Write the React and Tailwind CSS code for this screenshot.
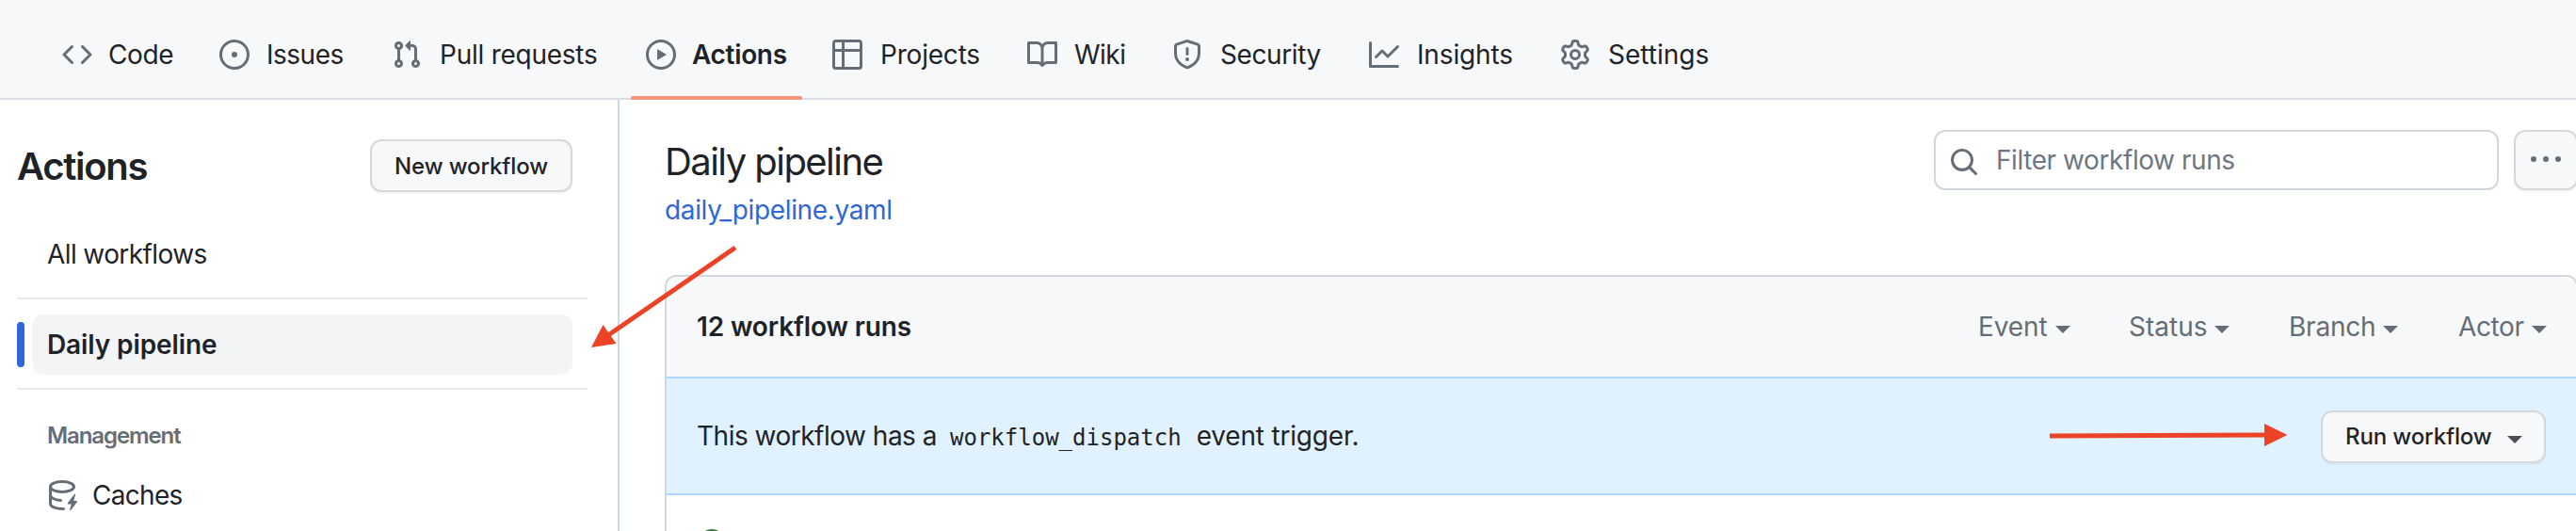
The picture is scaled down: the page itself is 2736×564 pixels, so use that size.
import React from "react";

const icons = {
  code: "m11.28 3.22 4.25 4.25a.75.75 0 0 1 0 1.06l-4.25 4.25a.749.749 0 0 1-1.275-.326.749.749 0 0 1 .215-.734L13.94 8l-3.72-3.72a.749.749 0 0 1 .326-1.275.749.749 0 0 1 .734.215Zm-6.56 0a.751.751 0 0 1 1.042.018.751.751 0 0 1 .018 1.042L2.06 8l3.72 3.72a.749.749 0 0 1-.326 1.275.749.749 0 0 1-.734-.215L.47 8.53a.75.75 0 0 1 0-1.06Z",
  issue: "M8 9.5a1.5 1.5 0 1 0 0-3 1.5 1.5 0 0 0 0 3ZM8 0a8 8 0 1 1 0 16A8 8 0 0 1 8 0ZM1.5 8a6.5 6.5 0 1 0 13 0 6.5 6.5 0 0 0-13 0Z",
  pull: "M1.5 3.25a2.25 2.25 0 1 1 3 2.122v5.256a2.251 2.251 0 1 1-1.5 0V5.372A2.25 2.25 0 0 1 1.5 3.25Zm5.677-.177L9.573.677A.25.25 0 0 1 10 .854V2.5h1A2.5 2.5 0 0 1 13.500 5v5.628a2.251 2.251 0 1 1-1.5 0V5a1 1 0 0 0-1-1h-1v1.646a.25.25 0 0 1-.427.177L7.177 3.427a.25.25 0 0 1 0-.354ZM3.75 2.5a.75.75 0 1 0 0 1.5.75.75 0 0 0 0-1.5Zm0 9.5a.75.75 0 1 0 0 1.5.75.75 0 0 0 0-1.5Zm8.25.75a.75.75 0 1 0 1.5 0 .75.75 0 0 0-1.5 0Z",
  play: "M8 0a8 8 0 1 1 0 16A8 8 0 0 1 8 0ZM1.5 8a6.5 6.5 0 1 0 13 0 6.5 6.5 0 0 0-13 0Zm4.879-2.773 4.264 2.559a.25.25 0 0 1 0 .428l-4.264 2.559A.25.25 0 0 1 6 10.559V5.442a.25.25 0 0 1 .379-.215Z",
  table: "M0 1.75C0 .784.784 0 1.75 0h12.5C15.216 0 16 .784 16 1.75v12.5A1.75 1.75 0 0 1 14.25 16H1.75A1.75 1.75 0 0 1 0 14.25ZM6.5 6.5v8h7.75a.25.25 0 0 0 .25-.25V6.5Zm8-1.5V1.75a.25.25 0 0 0-.25-.25H6.5V5Zm-13 1.5v7.75c0 .138.112.25.25.25H5v-8ZM5 5V1.5H1.75a.25.25 0 0 0-.25.25V5Z",
  book: "M0 1.75A.75.75 0 0 1 .75 1h4.253c1.227 0 2.317.59 3 1.501A3.743 3.743 0 0 1 11.006 1h4.245a.75.75 0 0 1 .75.75v10.5a.75.75 0 0 1-.75.75h-4.507a2.25 2.25 0 0 0-1.591.659l-.622.621a.75.75 0 0 1-1.06 0l-.622-.621A2.25 2.25 0 0 0 5.258 13H.75a.75.75 0 0 1-.75-.75Zm7.251 10.324.004-5.073-.002-2.253A2.25 2.25 0 0 0 5.003 2.5H1.5v9h3.757a3.75 3.75 0 0 1 1.994.574ZM8.755 4.75l-.004 7.322a3.752 3.752 0 0 1 1.992-.572H14.5v-9h-3.495a2.25 2.25 0 0 0-2.25 2.25Z",
  shield: "M7.467.133a1.748 1.748 0 0 1 1.066 0l5.25 1.68A1.75 1.75 0 0 1 15 3.48V7c0 1.566-.32 3.182-1.303 4.682-.983 1.498-2.585 2.813-5.032 3.855a1.697 1.697 0 0 1-1.33 0c-2.447-1.042-4.049-2.357-5.032-3.855C1.32 10.182 1 8.566 1 7V3.48a1.75 1.75 0 0 1 1.217-1.667Zm.61 1.429a.25.25 0 0 0-.153 0l-5.25 1.68a.25.25 0 0 0-.174.238V7c0 1.358.275 2.666 1.057 3.86.784 1.194 2.121 2.34 4.366 3.297a.196.196 0 0 0 .154 0c2.245-.956 3.582-2.104 4.366-3.298C13.225 9.666 13.5 8.36 13.5 7V3.48a.251.251 0 0 0-.174-.237l-5.25-1.68ZM8.75 4.75v3a.75.75 0 0 1-1.5 0v-3a.75.75 0 0 1 1.5 0ZM9 10.5a1 1 0 1 1-2 0 1 1 0 0 1 2 0Z",
  graph: "M1.5 1.75V13.5h13.75a.75.75 0 0 1 0 1.5H.75a.75.75 0 0 1-.75-.75V1.75a.75.75 0 0 1 1.5 0Zm14.28 2.53-5.25 5.25a.75.75 0 0 1-1.06 0L7 7.06 4.28 9.78a.751.751 0 0 1-1.042-.018.751.751 0 0 1-.018-1.042l3.25-3.25a.75.75 0 0 1 1.06 0L10 7.94l4.72-4.72a.751.751 0 0 1 1.042.018.751.751 0 0 1 .018 1.042Z",
  gear: "M8 0a8.2 8.2 0 0 1 .701.031C9.444.095 9.99.645 10.16 1.29l.288 1.107c.018.066.079.158.212.224.231.114.454.243.668.386.123.082.233.09.299.071l1.103-.303c.644-.176 1.392.021 1.82.63.27.385.506.792.704 1.218.315.675.111 1.422-.364 1.891l-.814.806c-.049.048-.098.147-.088.294.016.257.016.515 0 .772-.01.147.038.246.088.294l.814.806c.475.469.679 1.216.364 1.891a7.977 7.977 0 0 1-.704 1.217c-.428.61-1.176.807-1.82.63l-1.102-.302c-.067-.019-.177-.011-.3.071a5.909 5.909 0 0 1-.668.386c-.133.066-.194.158-.211.224l-.29 1.106c-.168.646-.715 1.196-1.458 1.26a8.006 8.006 0 0 1-1.402 0c-.743-.064-1.289-.614-1.458-1.26l-.289-1.106c-.018-.066-.079-.158-.212-.224a5.738 5.738 0 0 1-.668-.386c-.123-.082-.233-.09-.299-.071l-1.103.303c-.644.176-1.392-.021-1.82-.63a8.12 8.12 0 0 1-.704-1.218c-.315-.675-.111-1.422.363-1.891l.815-.806c.05-.048.098-.147.088-.294a6.214 6.214 0 0 1 0-.772c.01-.147-.038-.246-.088-.294l-.815-.806C.635 6.045.431 5.298.746 4.623a7.92 7.92 0 0 1 .704-1.217c.428-.61 1.176-.807 1.82-.63l1.102.302c.067.019.177.011.3-.071.214-.143.437-.272.668-.386.133-.066.194-.158.211-.224l.29-1.106C6.009.645 6.556.095 7.299.03 7.53.01 7.764 0 8 0Zm-.571 1.525c-.036.003-.108.036-.137.146l-.289 1.105c-.147.561-.549.967-.998 1.189-.173.086-.34.183-.5.29-.417.278-.97.423-1.529.27l-1.103-.303c-.109-.03-.175.016-.195.045-.22.312-.412.644-.573.99-.014.031-.021.11.059.19l.815.806c.411.406.562.957.53 1.456a4.709 4.709 0 0 0 0 .582c.032.499-.119 1.05-.53 1.456l-.815.806c-.081.08-.073.159-.059.19.162.346.353.677.573.989.02.03.085.076.195.046l1.102-.303c.56-.153 1.113-.008 1.53.27.161.107.328.204.501.29.447.222.85.629.997 1.189l.289 1.105c.029.109.101.143.137.146a6.6 6.6 0 0 0 1.142 0c.036-.003.108-.036.137-.146l.289-1.105c.147-.561.549-.967.998-1.189.173-.086.34-.183.5-.29.417-.278.97-.423 1.529-.27l1.103.303c.109.029.175-.016.195-.045.22-.313.411-.644.573-.99.014-.031.021-.11-.059-.19l-.815-.806c-.411-.406-.562-.957-.53-1.456a4.709 4.709 0 0 0 0-.582c-.032-.499.119-1.05.53-1.456l.815-.806c.081-.08.073-.159.059-.19a6.464 6.464 0 0 0-.573-.989c-.02-.03-.085-.076-.195-.046l-1.102.303c-.56.153-1.113.008-1.53-.27a4.44 4.44 0 0 0-.501-.29c-.447-.222-.85-.629-.997-1.189l-.289-1.105c-.029-.11-.101-.143-.137-.146a6.6 6.6 0 0 0-1.142 0ZM11 8a3 3 0 1 1-6 0 3 3 0 0 1 6 0ZM9.5 8a1.5 1.5 0 1 0-3.001.001A1.5 1.5 0 0 0 9.5 8Z",
  search: "M10.68 11.74a6 6 0 0 1-7.922-8.982 6 6 0 0 1 8.982 7.922l3.04 3.04a.749.749 0 0 1-.326 1.275.749.749 0 0 1-.734-.215ZM11.5 7a4.499 4.499 0 1 0-8.997 0A4.499 4.499 0 0 0 11.5 7Z",
  kebab: "M0 7.500a1.500 1.500 0 1 1 3 0 1.500 1.500 0 0 1-3 0Zm6.500 0a1.500 1.500 0 1 1 3 0 1.500 1.500 0 0 1-3 0Zm6.500 0a1.500 1.500 0 1 1 3 0 1.500 1.500 0 0 1-3 0Z",
};

const tabs = [
  { label: "Code", icon: "code", slot: "w-[71px] pl-px tracking-[-0.4px]" },
  { label: "Issues", icon: "issue", slot: "w-[87px] pl-0.5 tracking-[-0.5px]" },
  { label: "Pull requests", icon: "pull", slot: "w-[174px] pl-[3px] tracking-[-0.25px]" },
  { label: "Actions", icon: "play", slot: "w-[102px] pl-px font-semibold tracking-[-0.33px]", active: true },
  { label: "Projects", icon: "table", slot: "w-[111px] pl-[3px] tracking-[-0.2px]" },
  { label: "Wiki", icon: "book", slot: "w-[58px] pl-0.5 tracking-[-0.5px]" },
  { label: "Security", icon: "shield", slot: "w-[113px] pl-[3px] tracking-[-0.4px]" },
  { label: "Insights", icon: "graph", slot: "w-[107px] pl-[3px] tracking-[-0.15px]" },
  { label: "Settings", icon: "gear", slot: "w-[112px] pl-[3px]" },
];

const filters = [
  { label: "Event", slot: "w-[160px] tracking-[-0.1px]" },
  { label: "Status", slot: "w-[170px]" },
  { label: "Branch", slot: "w-[180px] tracking-[-0.2px]" },
  { label: "Actor", slot: "w-[93px] tracking-[-0.4px]" },
];

function Icon({ name, className }) {
  return (
    <svg viewBox="0 0 16 16" className={`size-8 shrink-0 text-[#656d76] ${className ?? ""}`} fill="currentColor">
      <path d={icons[name]} />
    </svg>
  );
}

function CacheIcon() {
  return (
    <svg viewBox="0 0 16 16" className="size-8 shrink-0 text-[#656d76]" fill="none" stroke="currentColor" strokeWidth="1.5" strokeLinecap="round">
      <ellipse cx="8" cy="3.5" rx="6.25" ry="2.75" />
      <path d="M1.750 3.500v9c0 1.500 2.700 2.700 7 2.750M1.750 8c0 1.200 2.200 2.500 5.500 2.730" />
      <path d="M14.600 7.400l-3.700 4.700c-.2.300 0 .6.300.6h1.700l-.8 2.900c-.1.400.3.600.6.300l3.200-4.300c.2-.3 0-.6-.3-.6h-1.400l.8-3.300c.1-.4-.2-.5-.4-.3z" fill="currentColor" stroke="none" />
    </svg>
  );
}

function Caret({ className }) {
  return (
    <svg viewBox="0 0 16 8" className={`mt-1.5 h-2 w-4 shrink-0 ${className ?? ""}`} fill="currentColor">
      <path d="M0 0h16L8 8z" />
    </svg>
  );
}

function Tab({ label, icon, slot, active }) {
  return (
    <div className="relative flex h-8 items-center gap-4 px-4">
      <Icon name={icon} />
      <span className={`leading-8 whitespace-nowrap ${slot}`}>{label}</span>
      {active && <span className="absolute inset-x-0 top-[60px] z-10 h-1 rounded-full bg-[#f4927b]" />}
    </div>
  );
}

export default function App() {
  return (
    <div className="relative flex h-[564px] w-[2736px] flex-col overflow-hidden bg-white font-['Inter',sans-serif] text-[28px] text-[#1f2328]">
      <nav className="flex h-[106px] shrink-0 gap-4 border-b-2 border-[#d9dde1] bg-[#f6f8fa] pt-[42px] pl-[50px]">
        {tabs.map((t) => <Tab key={t.label} {...t} />)}
      </nav>

      <div className="flex min-h-0 flex-1">
        <aside className="flex w-[658px] shrink-0 flex-col border-r-2 border-[#d0d7de] pl-[18px]">
          <div className="mt-[42px] flex h-14 items-center justify-between pr-12">
            <h1 className="pt-0.5 text-[40px] leading-[56px] font-semibold tracking-[-1.3px]">Actions</h1>
            <button className="h-14 w-[215px] rounded-xl border-2 border-[#d5d8da] bg-[#f6f8fa] pt-0.5 text-[24px] font-medium tracking-[-0.12px] shadow-[0_2px_0_rgba(31,35,40,0.04)]">New workflow</button>
          </div>
          <div className="mt-[34px] h-16 pl-8 leading-[64px] tracking-[-0.6px]">All workflows</div>
          <div className="mt-[14px] mr-8 h-0.5 bg-[#e8ebee]" />
          <div className="mt-4 flex h-16 items-center gap-2 pr-12">
            <span className="h-12 w-2 rounded-full bg-[#2f67d6]" />
            <span className="h-16 flex-1 rounded-xl bg-[#f3f4f6] pl-4 leading-[64px] font-semibold tracking-[-0.1px]">Daily pipeline</span>
          </div>
          <div className="mt-[14px] mr-8 h-0.5 bg-[#e8ebee]" />
          <div className="mt-[31px] pl-8 text-[24px] leading-[36px] font-semibold tracking-[-1.1px] text-[#656d76]">Management</div>
          <div className="mt-[13px] flex h-16 items-center gap-4 pl-8">
            <CacheIcon />
            <span className="tracking-[-0.7px]">Caches</span>
          </div>
        </aside>

        <main className="-mr-0.5 flex min-w-0 flex-1 flex-col pl-12">
          <div className="flex h-[186px] shrink-0 justify-between pt-8">
            <div className="pt-2">
              <h2 className="text-[40px] leading-[52px] tracking-[-1.55px]">Daily pipeline</h2>
              <a className="block leading-[50px] tracking-[-0.35px] text-[#2f67d6]">daily_pipeline.yaml</a>
            </div>
            <div className="flex gap-4">
              <div className="flex h-16 w-[600px] items-center gap-[18px] rounded-xl border-2 border-[#d0d7de] pl-3.5 text-[#6e7781]">
                <Icon name="search" className="mt-1" />
                <span className="tracking-[-0.43px]">Filter workflow runs</span>
              </div>
              <button className="flex h-16 w-[68px] items-center justify-center rounded-xl border-2 border-[#d5d8da] bg-[#f6f8fa] shadow-[0_2px_0_rgba(31,35,40,0.04)]">
                <Icon name="kebab" />
              </button>
            </div>
          </div>

          <section className="flex min-h-0 flex-1 flex-col rounded-t-xl border-2 border-b-0 border-[#d0d7de]">
            <div className="flex h-[106px] shrink-0 items-center justify-between rounded-t-[10px] bg-[#f6f8fa] pr-8 pl-8">
              <span className="font-semibold tracking-[-0.14px]">12 workflow runs</span>
              <div className="flex text-[#656d76]">
                {filters.map((f) => (
                  <span key={f.label} className={`flex items-center gap-2 ${f.slot}`}>{f.label}<Caret /></span>
                ))}
              </div>
            </div>
            <div className="flex h-[126px] shrink-0 items-center justify-between border-y-2 border-[#aed6fd] bg-[#e0f2ff] px-8">
              <p className="flex items-baseline whitespace-pre">
                <span className="tracking-[-0.5px]">This workflow has a</span>
                <code className="pr-4 pl-[14px] font-['DejaVu_Sans_Mono',monospace] text-[24px]">workflow_dispatch</code>
                <span className="tracking-[-0.18px]">event trigger.</span>
              </p>
              <button className="mt-0.5 flex h-14 w-[239px] items-center gap-4 rounded-xl border-2 border-[#d5d8da] bg-[#f6f8fa] pl-6 text-[24px] font-medium tracking-[-0.12px] shadow-[0_2px_0_rgba(31,35,40,0.04)]">
                Run workflow<Caret className="text-[#4b4f54]" />
              </button>
            </div>
            <div className="flex pt-9 pl-8">
              <span className="ml-0.5 size-7 shrink-0 rounded-full bg-[#3a7d3a]" />
            </div>
          </section>
        </main>
      </div>

      <svg className="pointer-events-none absolute inset-0 z-20" width="2736" height="564" viewBox="0 0 2736 564">
        <g stroke="#ec4326" strokeWidth="5" fill="#ec4326">
          <path d="M781 263 646 356" />
          <path d="M628 369l12.500-24 14.100 20z" stroke="none" />
          <path d="M2177 463l229-1" />
          <path d="M2405 450v24l24.500-12z" stroke="none" />
        </g>
      </svg>
    </div>
  );
}
